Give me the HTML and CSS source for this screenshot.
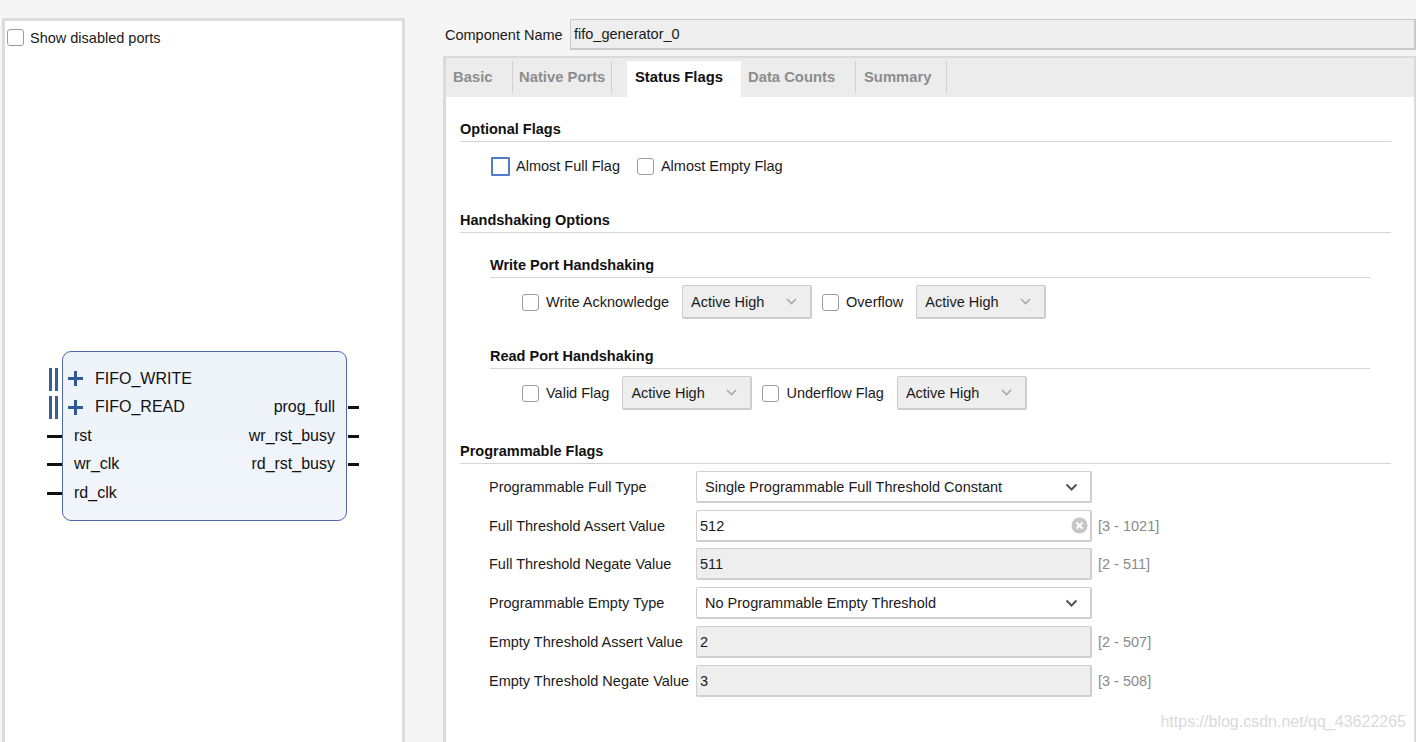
FILE: index.html
```html
<!DOCTYPE html>
<html>
<head>
<meta charset="utf-8">
<title>FIFO Generator</title>
<link rel="stylesheet" href="styles.css">
</head>
<body>
<div class="app">
  <aside class="left">
    <label class="cb-row"><span class="cb"></span><span>Show disabled ports</span></label>
    <div class="diagram">
      <div class="block">
        <div class="col col-left">
          <div class="port bus"><svg class="plus" width="15" height="15" viewBox="0 0 15 15"><rect x="0" y="6" width="15" height="3" fill="#2f5a98"/><rect x="6" y="0" width="3" height="15" fill="#2f5a98"/></svg>FIFO_WRITE</div>
          <div class="port bus"><svg class="plus" width="15" height="15" viewBox="0 0 15 15"><rect x="0" y="6" width="15" height="3" fill="#2f5a98"/><rect x="6" y="0" width="3" height="15" fill="#2f5a98"/></svg>FIFO_READ</div>
          <div class="port pin-l">rst</div>
          <div class="port pin-l">wr_clk</div>
          <div class="port pin-l">rd_clk</div>
        </div>
        <div class="col col-right">
          <div class="port"></div>
          <div class="port pin-r">prog_full</div>
          <div class="port pin-r">wr_rst_busy</div>
          <div class="port pin-r">rd_rst_busy</div>
        </div>
      </div>
    </div>
  </aside>

  <main class="right">
    <div class="comp-row">
      <span class="comp-label">Component Name</span>
      <div class="comp-input">fifo_generator_0</div>
    </div>
    <div class="tabpanel">
      <div class="tabbar">
        <div class="tab tab-basic">Basic</div>
        <div class="tab tab-native">Native Ports</div>
        <div class="tab-active">Status Flags</div>
        <div class="tab tab-data">Data Counts</div>
        <div class="tab tab-summary">Summary</div>
      </div>
      <div class="content">
        <div class="sec-title">Optional Flags</div>
        <div class="opt-row">
          <span class="cb cb-focus"></span><span class="lbl lbl-wide">Almost Full Flag</span>
          <span class="cb"></span><span class="lbl">Almost Empty Flag</span>
        </div>

        <div class="sec-title sec-hs">Handshaking Options</div>
        <div class="subsec">
          <div class="sub-title">Write Port Handshaking</div>
          <div class="hs-row">
            <span class="cb"></span><span class="lbl">Write Acknowledge</span>
            <div class="hs-select"><span>Active High</span><svg width="11" height="7" viewBox="0 0 11 7"><polyline points="1,1 5.5,5.5 10,1" fill="none" stroke="#a8a8a8" stroke-width="1.6"/></svg></div>
            <span class="cb"></span><span class="lbl">Overflow</span>
            <div class="hs-select"><span>Active High</span><svg width="11" height="7" viewBox="0 0 11 7"><polyline points="1,1 5.5,5.5 10,1" fill="none" stroke="#a8a8a8" stroke-width="1.6"/></svg></div>
          </div>
          <div class="sub-title sub-read">Read Port Handshaking</div>
          <div class="hs-row">
            <span class="cb"></span><span class="lbl">Valid Flag</span>
            <div class="hs-select"><span>Active High</span><svg width="11" height="7" viewBox="0 0 11 7"><polyline points="1,1 5.5,5.5 10,1" fill="none" stroke="#a8a8a8" stroke-width="1.6"/></svg></div>
            <span class="cb"></span><span class="lbl">Underflow Flag</span>
            <div class="hs-select"><span>Active High</span><svg width="11" height="7" viewBox="0 0 11 7"><polyline points="1,1 5.5,5.5 10,1" fill="none" stroke="#a8a8a8" stroke-width="1.6"/></svg></div>
          </div>
        </div>

        <div class="sec-title sec-pf">Programmable Flags</div>
        <div class="pf-rows">
          <div class="pf-row">
            <span class="pf-label">Programmable Full Type</span>
            <div class="field field-select"><span>Single Programmable Full Threshold Constant</span><svg width="13" height="8" viewBox="0 0 13 8"><polyline points="1.5,1.5 6.5,6.5 11.5,1.5" fill="none" stroke="#555" stroke-width="2"/></svg></div>
          </div>
          <div class="pf-row pf-row-2">
            <span class="pf-label">Full Threshold Assert Value</span>
            <div class="field field-input"><span>512</span><svg width="17" height="17" viewBox="0 0 17 17"><circle cx="8.5" cy="8.5" r="8" fill="#c6c6c6"/><line x1="5.5" y1="5.5" x2="11.5" y2="11.5" stroke="#fff" stroke-width="2.2"/><line x1="11.5" y1="5.5" x2="5.5" y2="11.5" stroke="#fff" stroke-width="2.2"/></svg></div>
            <span class="range">[3 - 1021]</span>
          </div>
          <div class="pf-row">
            <span class="pf-label">Full Threshold Negate Value</span>
            <div class="field field-ro"><span>511</span></div>
            <span class="range">[2 - 511]</span>
          </div>
          <div class="pf-row">
            <span class="pf-label">Programmable Empty Type</span>
            <div class="field field-select"><span>No Programmable Empty Threshold</span><svg width="13" height="8" viewBox="0 0 13 8"><polyline points="1.5,1.5 6.5,6.5 11.5,1.5" fill="none" stroke="#555" stroke-width="2"/></svg></div>
          </div>
          <div class="pf-row">
            <span class="pf-label">Empty Threshold Assert Value</span>
            <div class="field field-ro"><span>2</span></div>
            <span class="range">[2 - 507]</span>
          </div>
          <div class="pf-row">
            <span class="pf-label">Empty Threshold Negate Value</span>
            <div class="field field-ro"><span>3</span></div>
            <span class="range">[3 - 508]</span>
          </div>
        </div>
      </div>
    </div>
  </main>
</div>
<div class="watermark">https://blog.csdn.net/qq_43622265</div>
</body>
</html>
```

FILE: styles.css
```css
html, body {
  margin: 0;
  padding: 0;
  height: 742px;
  overflow: hidden;
}
body {
  background: #f5f5f5;
  font-family: "Liberation Sans", Arial, sans-serif;
  font-size: 14.5px;
  color: #1a1a1a;
}
.app {
  display: flex;
  height: 742px;
}

/* ---------- left panel ---------- */
.left {
  box-sizing: border-box;
  margin: 18px 0 0 2px;
  width: 403px;
  height: 724px;
  border: 3px solid #dcdcdc;
  border-bottom: none;
  background: #fff;
}
.cb-row {
  display: flex;
  align-items: center;
  gap: 6px;
  padding: 8px 0 0 2px;
  height: 17px;
}
.cb {
  box-sizing: border-box;
  display: inline-block;
  flex: none;
  width: 17px;
  height: 17px;
  border: 1.5px solid #9c9c9c;
  border-radius: 3px;
  background: #fff;
}
.cb-focus {
  width: 19px;
  height: 19px;
  border: 2px solid #4f7dcc;
  border-radius: 1px;
}
.diagram {
  margin: 305px 0 0 57px;
}
.block {
  box-sizing: border-box;
  width: 285px;
  height: 170px;
  border: 1px solid #4a69a6;
  border-radius: 9px;
  background: linear-gradient(#eef3fa, #f1f5fa);
  display: flex;
  justify-content: space-between;
  padding: 12.5px 11px 0 11px;
  font-size: 16px;
  color: #111;
}
.col {
  display: flex;
  flex-direction: column;
}
.col-right {
  align-items: flex-end;
}
.port {
  position: relative;
  height: 28.5px;
  display: flex;
  align-items: center;
  white-space: nowrap;
}
.bus {
  margin-left: -6px;
}
.bus .plus {
  margin-right: 12px;
}
.bus::before {
  content: "";
  position: absolute;
  left: -19px;
  top: 3px;
  width: 3px;
  height: 23px;
  border-left: 3px solid #3a5f98;
  border-right: 3px solid #3a5f98;
}
.pin-l::before {
  content: "";
  position: absolute;
  left: -27px;
  top: 13px;
  width: 15px;
  height: 3px;
  background: #111;
}
.pin-r::after {
  content: "";
  position: absolute;
  right: -24px;
  top: 13px;
  width: 11px;
  height: 3px;
  background: #111;
}

/* ---------- right side ---------- */
.right {
  flex: 1;
  margin-left: 38px;
  display: flex;
  flex-direction: column;
  min-width: 0;
}
.comp-row {
  margin-top: 19px;
  height: 31px;
  display: flex;
  align-items: center;
}
.comp-label {
  margin-left: 2px;
  width: 125px;
  flex: none;
}
.comp-input {
  box-sizing: border-box;
  flex: 1;
  height: 31px;
  line-height: 29px;
  padding-left: 3px;
  background: #eeeeee;
  border: 1px solid #c9c9c9;
  border-width: 1px 2px 2px 1px;
}
.tabpanel {
  flex: 1;
  margin-top: 6px;
  border: 2px solid #dadada;
  border-left-width: 3px;
  border-bottom: none;
  background: #fff;
  display: flex;
  flex-direction: column;
}
.tabbar {
  height: 39px;
  background: #ececec;
  display: flex;
  align-items: flex-start;
  font-weight: bold;
  font-size: 14.8px;
}
.tab {
  box-sizing: border-box;
  margin-top: 3px;
  height: 32px;
  line-height: 32px;
  color: #8c8c8c;
  border-right: 1px solid #d0d0d0;
  padding-left: 7px;
  white-space: nowrap;
}
.tab-basic { width: 67px; }
.tab-native { width: 99px; padding-left: 6px; }
.tab-data { width: 115px; }
.tab-summary { width: 91px; padding-left: 8px; }
.tab-active {
  box-sizing: border-box;
  margin-top: 3px;
  margin-left: 15px;
  width: 114px;
  height: 36px;
  line-height: 32px;
  padding-left: 8px;
  background: #fff;
  color: #111;
  white-space: nowrap;
}

.content {
  padding: 20px 23px 0 14px;
}
.sec-title {
  font-weight: bold;
  line-height: 24px;
  border-bottom: 1px solid #d4d4d4;
  color: #111;
}
.sec-hs { margin-top: 30px; }
.sec-pf { margin-top: 29px; }
.opt-row {
  margin-top: 12px;
  height: 24px;
  padding-left: 31px;
  display: flex;
  align-items: center;
}
.opt-row .cb { margin-right: 7px; }
.opt-row .cb-focus { margin-right: 6px; }
.lbl-wide { margin-right: 17px; }

.subsec {
  padding: 0 21px 0 30px;
}
.sub-title {
  margin-top: 20px;
  font-weight: bold;
  line-height: 24px;
  border-bottom: 1px solid #d4d4d4;
  color: #111;
}
.sub-read { margin-top: 25px; }
.hs-row {
  margin-top: 7px;
  height: 34px;
  padding-left: 32px;
  display: flex;
  align-items: center;
}
.hs-row .cb { margin-right: 7px; }
.hs-row .lbl { margin-right: 13px; }
.hs-select {
  box-sizing: border-box;
  width: 130px;
  height: 34px;
  margin-right: 10px;
  padding: 0 13px 0 8px;
  background: #eeeeee;
  border: 1px solid #cdcdcd;
  border-width: 1px 2px 2px 1px;
  border-radius: 2px;
  display: flex;
  align-items: center;
  justify-content: space-between;
}

.pf-rows {
  margin-top: 7px;
  padding-left: 29px;
}
.pf-row {
  display: flex;
  align-items: center;
  height: 32px;
  margin-bottom: 7px;
}
.pf-row-2 {
  margin-top: 2px;
  margin-bottom: 6px;
}
.pf-label {
  width: 207px;
  flex: none;
  white-space: nowrap;
}
.field {
  box-sizing: border-box;
  width: 396px;
  height: 32px;
  flex: none;
  display: flex;
  align-items: center;
  justify-content: space-between;
  border: 1px solid #cfcfcf;
  border-width: 1px 2px 2px 1px;
  border-radius: 2px;
  background: #fff;
}
.field-select {
  padding: 0 12px 0 8px;
}
.field-input {
  padding: 0 2px 0 3px;
}
.field-ro {
  padding-left: 3px;
  background: #eeeeee;
}
.range {
  margin-left: 6px;
  color: #8a8a8a;
}

.watermark {
  position: absolute;
  right: 10px;
  bottom: 11px;
  font-size: 16px;
  line-height: 18px;
  color: #dadada;
}
```
